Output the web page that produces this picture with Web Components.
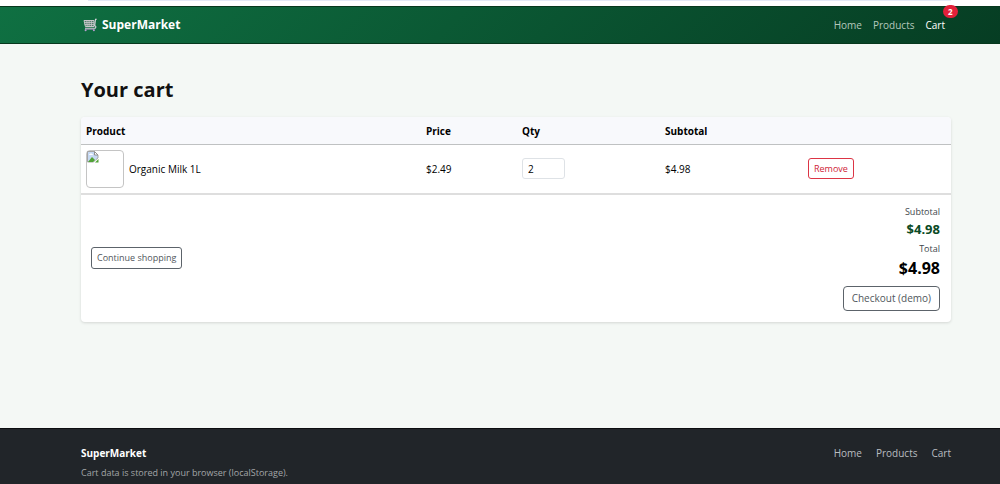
<!DOCTYPE html>
<html lang="en">
<head>
<meta charset="utf-8">
<title>SuperMarket – Your cart</title>
<style>
html{height:100%}
body{margin:0;min-height:100%;display:flex;flex-direction:column;background:#f4f8f5;color:#000;
 font:10px/16px "Open Sans","Noto Sans",sans-serif;--gutter:0 49px 0 81px}
cart-page{flex:1}
</style>
</head>
<body>
<window-edge></window-edge>
<site-header><span slot="brand">SuperMarket</span></site-header>
<cart-page><span slot="title">Your cart</span><cart-card></cart-card></cart-page>
<site-footer><span slot="brand">SuperMarket</span><span slot="note">Cart data is stored in your browser (localStorage).</span></site-footer>
<script>
const define = (name, html) => {
  const t = document.createElement('template');
  t.innerHTML = '<style>*{box-sizing:border-box}</style>' + html;
  customElements.define(name, class extends HTMLElement {
    constructor() { super(); this.attachShadow({mode: 'open'}).append(t.content.cloneNode(true)); }
  });
};

define('window-edge', `<style>
:host{display:block;height:6px;background:#fff}
div{height:1px;margin:0 49px 0 88px;background:#e3e9f6}
</style><div></div>`);

define('cart-icon', `<style>:host{display:block;width:14px;height:14px}svg{display:block}</style>
<svg width="14" height="14" viewBox="0 0 14 14" fill="none" aria-hidden="true">
<path d="M1 2.5h10v6H2.4z" fill="#4f7d68" stroke="#c9c7cc"/>
<path d="M1.4 4.5h9.6M1.8 6.5h9.2M3.8 2.5l.4 6M6.1 2.5v6M8.4 2.5v6" stroke="#c9c7cc" stroke-width=".8"/>
<path d="M13.8 1.2h-1.3l-.8 6.5q2 .8.6 2.5H2" stroke="#d9d3dd" stroke-width="1.1"/>
<path d="M2 11.3h9.4" stroke="#a28bb8" stroke-width=".8"/>
<circle cx="2.6" cy="12.2" r="1" fill="#b79fd0"/><circle cx="10.9" cy="12.2" r="1" fill="#b79fd0"/></svg>`);

define('count-badge', `<style>
:host{display:block;min-width:14px;height:13px;padding:0 5px;border-radius:7px;background:#e3203a;color:#fff;font-size:8px;line-height:13px;font-weight:700;text-align:center;box-sizing:border-box}
</style><slot></slot>`);

define('site-header', `<style>
:host{display:block;background:linear-gradient(135deg,#0f7042,#063d23);border-top:1px solid #06381d;border-bottom:1px solid #06381d}
header{display:flex;justify-content:space-between;align-items:center;height:36px;padding:var(--gutter)}
a{color:#b4c8bc;text-decoration:none}
.brand{display:flex;align-items:center;gap:5px;padding-left:2px;color:#fff;font-size:12px;font-weight:700}
nav{display:flex;gap:11px;padding-right:6px}
.current{position:relative;color:#fff}
count-badge{position:absolute;left:100%;top:0;transform:translate(-2px,-12px)}
</style>
<header><a class="brand" href="#"><cart-icon></cart-icon><slot name="brand"></slot></a>
<nav><a href="#">Home</a><a href="#">Products</a><a class="current" href="#">Cart<count-badge>2</count-badge></a></nav></header>`);

define('cart-page', `<style>
:host{display:block;box-sizing:border-box;padding:var(--gutter)}
h1{margin:32px 0 13px;font-size:20px;line-height:28px;font-weight:700;color:#111}
</style><main><h1><slot name="title"></slot></h1><slot></slot></main>`);

define('broken-image', `<style>
:host{display:block;width:38px;height:38px;border:1px solid #c4c4c4;border-radius:4px;box-sizing:border-box}
svg{display:block}
</style><svg width="12" height="12" viewBox="0 0 12 12" role="img" aria-label="Organic Milk 1L">
<path d="M.5.5h7l3.5 3.5v3L9 8.5 6.5 11H.5z" fill="#c6d9f3" stroke="#a5a5a5"/>
<path d="M1 11l4-5 3 3-2 2z" fill="#51a336"/><path d="M2 4q0-1 1-1 1-1.5 2 0 1 0 1 1z" fill="#fff"/>
<path d="M7.5.5V4H11z" fill="#fff" stroke="#909090"/><path d="M8 11.5h3.5V8z" fill="#51a336"/></svg>`);

define('cart-card', `<style>
:host{display:block;background:#fff;border-radius:4px;box-shadow:0 1px 3px #0002;overflow:hidden}
table{width:100%;border-collapse:collapse;table-layout:fixed;border-bottom:2px solid #dedede}
th,td{padding:5px;text-align:left}
th{height:27px;padding:6px 5px 4px;background:#f8f9fc;border-bottom:1px solid #bfc1c2;font-weight:700}
td{height:48px}
.price{width:96px}.mid{width:143px}.last{width:148px}
.item{display:flex;align-items:center;gap:5px}
input{display:block;width:43px;height:21px;padding:0 5px;border:1px solid #dee2e6;border-radius:3px;background:#fff;color:#000;font:inherit;appearance:textfield}
input::-webkit-inner-spin-button{appearance:none}
button,.link{display:block;padding:2px 5px;border:1px solid #5c636a;border-radius:3px;background:#fff;color:#50565c;font:inherit;font-size:9px;line-height:16px;text-decoration:none;white-space:nowrap}
.remove{border-color:#dc3545;color:#cf2436;height:21px;line-height:15px}
.summary{display:flex;justify-content:space-between;align-items:center;padding:10px 11px 11px 10px}
dl{display:grid;justify-items:end;margin:0 0 5px}
dt{font-size:9px;line-height:14px;color:#40464c}
dd{margin:0 0 2px;font-size:13px;line-height:21px;font-weight:700;color:#0a4a25}
.total{margin:0;font-size:16px;line-height:25px;color:#000}
.checkout{margin-left:auto;padding:3px 8px;border-radius:4px;font-size:10px;line-height:17px}
</style>
<table><colgroup><col><col class="price"><col class="mid"><col class="mid"><col class="last"></colgroup>
<thead><tr><th>Product</th><th>Price</th><th>Qty</th><th>Subtotal</th><th></th></tr></thead>
<tbody><tr><td><div class="item"><broken-image></broken-image><label for="qty">Organic Milk 1L</label></div></td><td>$2.49</td>
<td><input id="qty" type="number" value="2" min="1"></td><td>$4.98</td><td><button class="remove" type="button">Remove</button></td></tr></tbody></table>
<div class="summary"><a class="link" href="#">Continue shopping</a>
<div><dl><dt>Subtotal</dt><dd>$4.98</dd><dt>Total</dt><dd class="total">$4.98</dd></dl>
<button class="checkout" type="button">Checkout (demo)</button></div></div>`);

define('site-footer', `<style>
:host{display:block;background:#212529;border-top:1px solid #0c0e10;color:#fff}
footer{display:flex;justify-content:space-between;padding:var(--gutter)}
section{padding:16px 0 3px}
strong{display:block;margin-bottom:4px}
small{display:block;font-size:9px;color:#a3a6a8}
nav{display:flex;gap:14px;padding-top:16px}
a{color:#b9bdc0;text-decoration:none}
</style><footer><section><strong><slot name="brand"></slot></strong><small><slot name="note"></slot></small></section>
<nav><a href="#">Home</a><a href="#">Products</a><a href="#">Cart</a></nav></footer>`);
</script>
</body>
</html>
